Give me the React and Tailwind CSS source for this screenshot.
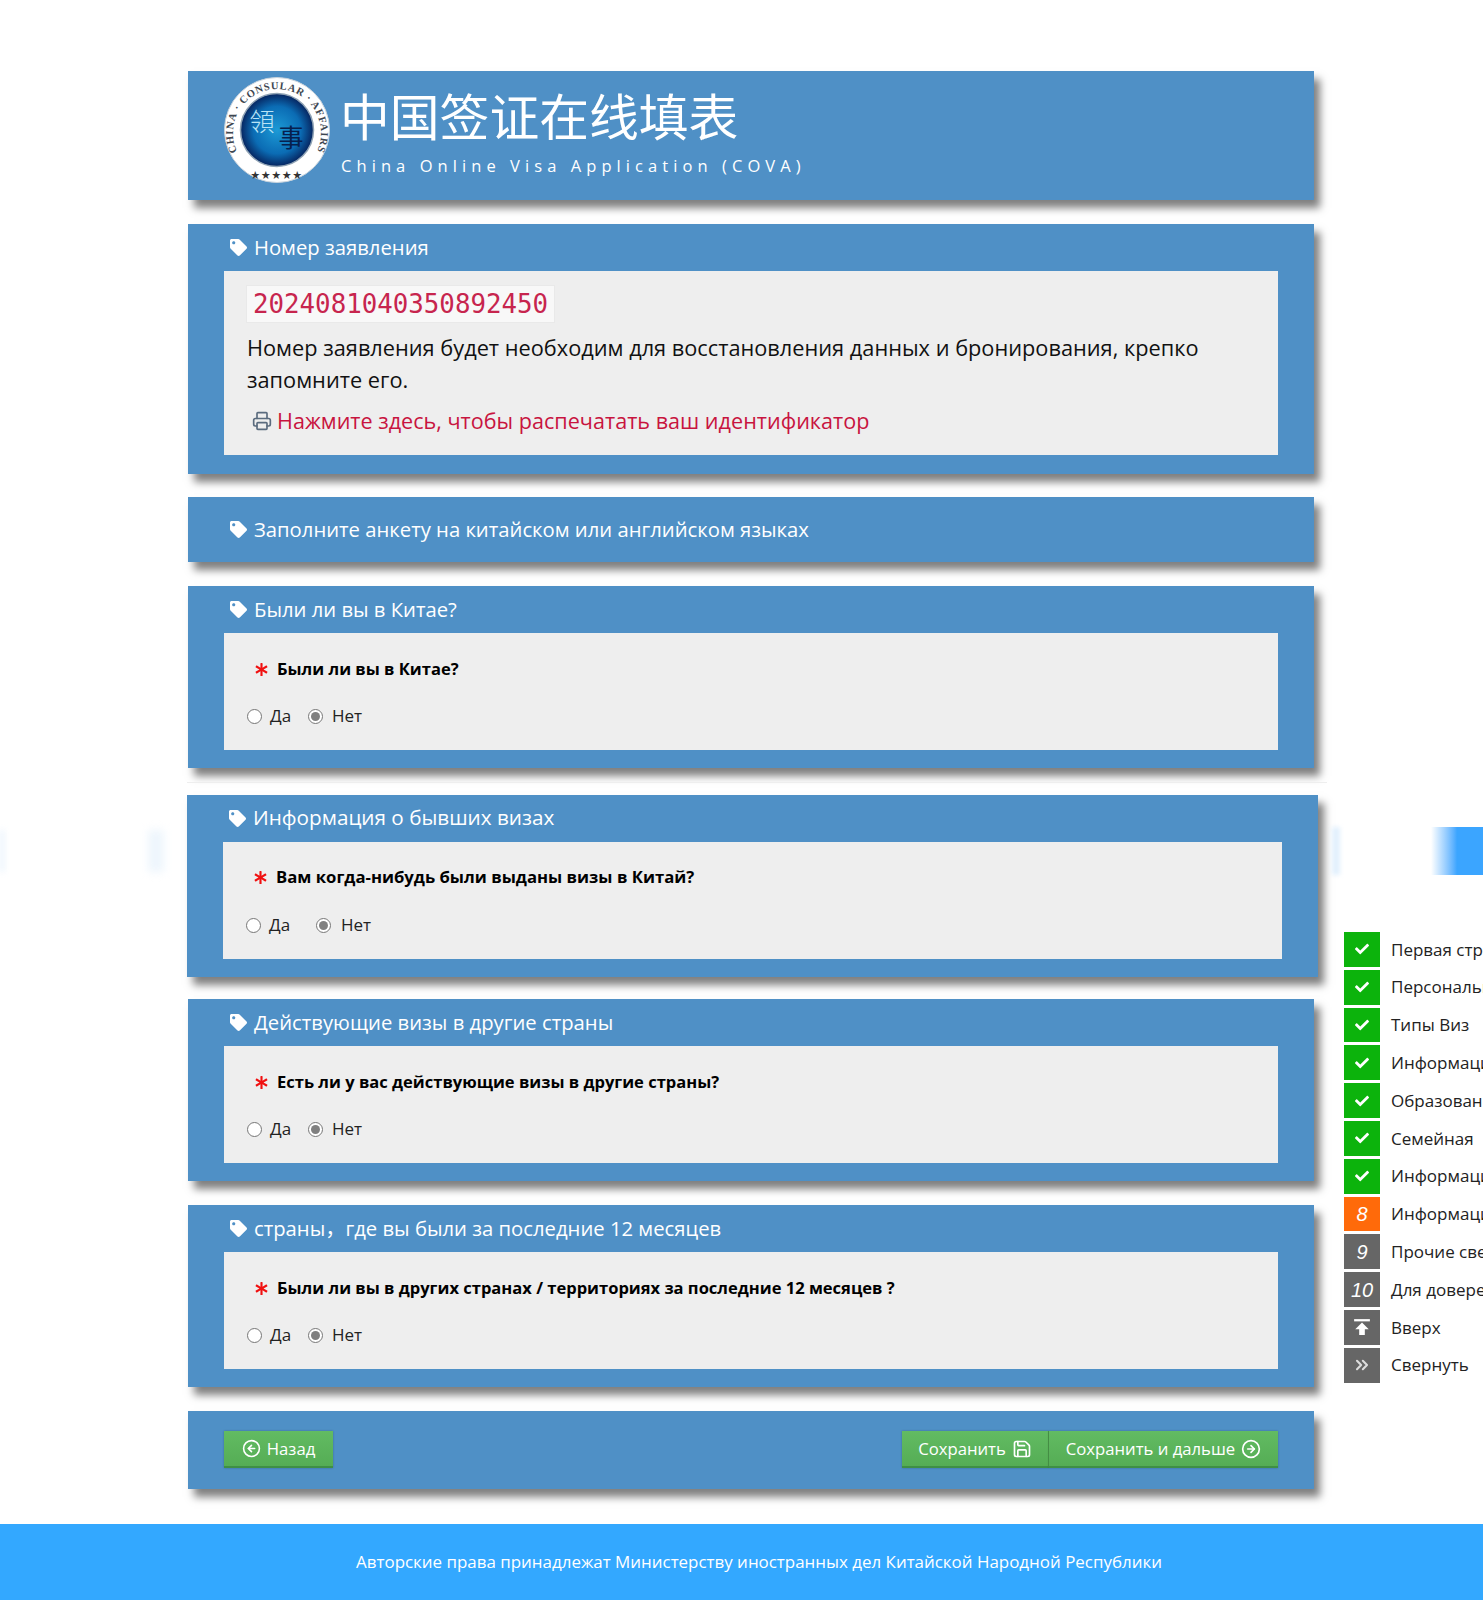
import React from 'react';
import { FaTag, FaCheck, FaAsterisk } from 'react-icons/fa';
import { Printer, Save, CircleArrowLeft, CircleArrowRight, ChevronsRight } from 'lucide-react';

const sideItems = [
  { label: 'Первая страница', done: true },
  { label: 'Персональная информация', done: true },
  { label: 'Типы Виз', done: true },
  { label: 'Информация о работе', done: true },
  { label: 'Образование', done: true },
  { label: 'Семейная', done: true },
  { label: 'Информация о поездке', done: true },
  { label: 'Информация о визах', num: '8', active: true },
  { label: 'Прочие сведения', num: '9' },
  { label: 'Для доверенного лица', num: '10' },
];

const Logo = () => (
  <svg viewBox="0 0 106 106" className="w-[106px] h-[106px] shrink-0">
    <defs>
      <radialGradient id="seal" cx="50%" cy="50%" r="50%">
        <stop offset="0%" stopColor="#1c9ad6" />
        <stop offset="65%" stopColor="#0b6cb4" />
        <stop offset="100%" stopColor="#06245f" />
      </radialGradient>
      <path id="ring" d="M 12 72 A 44 44 0 1 1 94 72" />
    </defs>
    <circle cx="53" cy="53" r="52.5" fill="#fff" stroke="#c9d3dc" />
    <circle cx="53" cy="53" r="36.5" fill="url(#seal)" stroke="#8fa3b5" strokeWidth="1.5" />
    <text fontSize="10.5" fontWeight="700" fill="#3d4650" fontFamily="'Liberation Serif', serif" letterSpacing="0.8">
      <textPath href="#ring" startOffset="50%" textAnchor="middle">CHINA · CONSULAR · AFFAIRS</textPath>
    </text>
    <text x="38" y="54" fontSize="25" fill="#b9e3f5" textAnchor="middle" fontFamily="'Noto Sans CJK TC', sans-serif" fontWeight="300">領</text>
    <text x="67" y="70" fontSize="25" fill="#06204f" textAnchor="middle" fontFamily="'Noto Sans CJK TC', sans-serif" fontWeight="400">事</text>
    <text x="53" y="101" fontSize="9" fill="#333" textAnchor="middle" letterSpacing="1.5">★★★★★</text>
  </svg>
);

const Radio = ({ checked }) => (
  <span className={`w-[15px] h-[15px] rounded-full border bg-white flex items-center justify-center shrink-0 ${checked ? 'border-[#777]' : 'border-[#767676]'}`}>
    {checked && <span className="w-[9px] h-[9px] rounded-full bg-[#808080]" />}
  </span>
);

const Heading = ({ children, className = 'h-[47px]', wide }) => (
  <div className={`flex items-center pl-[6px] text-white ${wide ? 'text-[20.7px]' : 'text-[20.25px]'} ${className}`}>
    <FaTag className="text-[17px] mr-[7px] shrink-0" />
    <span className={wide ? '-mt-[2px]' : ''}>{children}</span>
  </div>
);

const Question = ({ title, question, wide }) => (
  <section className={`bg-[#4f90c6] px-[36px] pb-[18px] shadow-[6px_8px_8px_rgba(0,0,0,0.5)] ${wide ? '-ml-px -mr-[4px] mb-[22px]' : 'mb-[24px]'}`}>
    <Heading wide={wide}>{title}</Heading>
    <div className="bg-[#eeeeee] h-[117px] flex flex-col text-black">
      <div className={`flex items-center pl-[31px] h-[22px] font-bold ${wide ? 'mt-[24px] text-[16.7px]' : 'mt-[25px] text-[16.55px]'}`}>
        <FaAsterisk className="text-[#f01010] text-[13px] w-[13px] h-[13px] mr-[9px] shrink-0" />
        <span>{question}</span>
      </div>
      <div className={`flex items-center pl-[23px] h-[22px] text-[17px] text-[#222] ${wide ? 'mt-[26px]' : 'mt-[25px]'}`}>
        <Radio />
        <span className="ml-[8px] w-[38px]">Да</span>
        <span className={wide ? 'ml-[9px]' : ''}><Radio checked /></span>
        <span className={wide ? 'ml-[10px]' : 'ml-[9px]'}>Нет</span>
      </div>
    </div>
  </section>
);

const GreenButton = ({ children, className = '' }) => (
  <button className={`h-[37px] flex items-center justify-center gap-[6px] text-[16.7px] text-white bg-gradient-to-b from-[#62bb62] to-[#55ad55] border-b-2 border-[#3f8f45] shadow-[0_0_2px_rgba(0,0,0,0.25)] ${className}`}>
    {children}
  </button>
);

const App = () => {
  return (
    <div className="relative w-full h-[1600px] overflow-hidden bg-white font-['Open_Sans','Noto_Sans_CJK_SC',sans-serif]">
      <main className="ml-[188px] w-[1126px] pt-[71px]">
        {/* шапка */}
        <header className="h-[129px] bg-[#4f90c6] pl-[36px] pt-[6px] flex shadow-[6px_8px_8px_rgba(0,0,0,0.5)] mb-[24px]">
          <Logo />
          <div className="ml-[10px] text-white">
            <div className="text-[49.8px] leading-[72px] mt-[1px] font-normal font-['Noto_Sans_CJK_SC',sans-serif] whitespace-nowrap">中国签证在线填表</div>
            <div className="text-[16.5px] leading-[22px] mt-[5px] ml-px tracking-[5.07px] whitespace-nowrap">China Online Visa Application (COVA)</div>
          </div>
        </header>

        {/* номер заявления */}
        <section className="bg-[#4f90c6] px-[36px] pb-[19px] shadow-[6px_8px_8px_rgba(0,0,0,0.5)] mb-[23px]">
          <Heading>Номер заявления</Heading>
          <div className="bg-[#eeeeee] h-[184px] pl-[23px] pr-[40px] pt-[14px] text-[#111]">
            <code className="inline-block -ml-px h-[38px] px-[6px] bg-[#f8f8f8] border border-[#e9e9e9] text-[#c7254e] text-[25.8px] leading-[36px] font-['DejaVu_Sans_Mono',monospace]">2024081040350892450</code>
            <p className="text-[21.75px] leading-[32px] mt-[9px]">Номер заявления будет необходим для восстановления данных и бронирования, крепко запомните его.</p>
            <div className="flex items-center mt-[9px] pl-[5px] h-[32px] text-[21.6px] text-[#c8143f]">
              <Printer className="w-[20px] h-[20px] text-[#5a6b7e] mr-[5px]" strokeWidth={2} />
              <span>Нажмите здесь, чтобы распечатать ваш идентификатор</span>
            </div>
          </div>
        </section>

        <section className="bg-[#4f90c6] px-[36px] shadow-[6px_8px_8px_rgba(0,0,0,0.5)] mb-[24px]">
          <Heading className="h-[65px]">Заполните анкету на китайском или английском языках</Heading>
        </section>

        <Question title="Были ли вы в Китае?" question="Были ли вы в Китае?" />
        <hr className="border-[#eeeeee] -mt-[10px] mb-[12px] -ml-px -mr-[13px]" />
        <Question wide title="Информация о бывших визах" question="Вам когда-нибудь были выданы визы в Китай?" />
        <Question title="Действующие визы в другие страны" question="Есть ли у вас действующие визы в другие страны?" />
        <Question title="страны，где вы были за последние 12 месяцев" question="Были ли вы в других странах / территориях за последние 12 месяцев ?" />

        {/* кнопки */}
        <section className="h-[78px] bg-[#4f90c6] px-[36px] pt-[20px] flex justify-between shadow-[6px_8px_8px_rgba(0,0,0,0.5)]">
          <GreenButton className="w-[109px]">
            <CircleArrowLeft className="w-[19px] h-[19px]" strokeWidth={2} />
            Назад
          </GreenButton>
          <div className="flex">
            <GreenButton className="w-[147px] border-r border-r-[#4a9a4a]">
              Сохранить
              <Save className="w-[20px] h-[20px]" strokeWidth={2} />
            </GreenButton>
            <GreenButton className="w-[229px]">
              Сохранить и дальше
              <CircleArrowRight className="w-[20px] h-[20px]" strokeWidth={2} />
            </GreenButton>
          </div>
        </section>
      </main>

      <footer className="absolute left-0 right-0 bottom-0 h-[76px] pl-[35px] bg-[#33a8ff] flex items-center justify-center text-[16.93px] text-white">
        Авторские права принадлежат Министерству иностранных дел Китайской Народной Республики
      </footer>

      {/* размытые следы полосы на фоне */}
      <div className="absolute top-[830px] left-0 w-[4px] h-[42px] blur-[3px] bg-[#e6f2fd]" />
      <div className="absolute top-[830px] left-[148px] w-[16px] h-[42px] blur-[4px] bg-[#eef6fd]" />
      <div className="absolute top-[827px] left-[1332px] w-[8px] h-[48px] blur-[2px] bg-[#e2f0fd]" />
      <div className="absolute top-[827px] right-0 w-[52px] h-[48px] bg-gradient-to-r from-white via-[#3ba5ff] to-[#3ba5ff]" />

      {/* боковое меню */}
      <nav className="absolute left-[1344px] top-[932px] w-[400px] flex flex-col gap-[3px]">
        {sideItems.map((item) => (
          <div key={item.label} className="flex items-center h-[34.8px] text-[17px] text-[#222] whitespace-nowrap">
            <span className={`w-[36px] h-full flex items-center justify-center text-white mr-[11px] ${item.done ? 'bg-[#0cb30c]' : item.active ? 'bg-[#ff6a0a]' : 'bg-[#666666]'}`}>
              {item.done ? <FaCheck className="text-[14px]" /> : <em className="text-[20px] font-['Liberation_Sans',sans-serif]">{item.num}</em>}
            </span>
            {item.label}
          </div>
        ))}
        <div className="flex items-center h-[34.8px] text-[17px] text-[#222]">
          <span className="w-[36px] h-full flex items-center justify-center bg-[#666666] mr-[11px]">
            <svg viewBox="0 0 16 16" className="w-[18px] h-[18px]" fill="#fff">
              <rect x="1" y="1" width="14" height="2" />
              <path d="M8 4 L14 10 H10.5 V15 H5.5 V10 H2 Z" />
            </svg>
          </span>
          Вверх
        </div>
        <div className="flex items-center h-[34.8px] text-[17px] text-[#222]">
          <span className="w-[36px] h-full flex items-center justify-center bg-[#666666] mr-[11px] text-[#ddd]">
            <ChevronsRight className="w-[20px] h-[20px]" strokeWidth={2.5} />
          </span>
          Свернуть
        </div>
      </nav>
    </div>
  );
};

export default App;
